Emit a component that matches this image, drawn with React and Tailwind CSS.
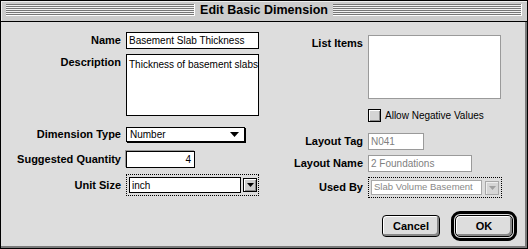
import React from 'react';

const sans = "font-['Liberation_Sans',Arial,sans-serif]";

const Stripes = () => (
  <div className="flex-1 h-[12px] bg-[repeating-linear-gradient(to_bottom,#777777_0px,#777777_1px,#f2f2f2_1px,#f2f2f2_2px)] shadow-[inset_-1px_-1px_0_#ffffff]" />
);

const Label = ({ children, width, className = '' }) => (
  <div className={`${width} shrink-0 text-right text-[11px] leading-[13px] font-bold text-black ${className}`}>
    {children}
  </div>
);

const Arrow = ({ color = '#000000', size = 'w-[9px] h-[5px]' }) => (
  <svg viewBox="0 0 9 5" className={size}>
    <polygon points="0,0 9,0 4.5,5" fill={color} />
  </svg>
);

const ArrowButton = ({ disabled }) => (
  <div
    className={`w-[14px] h-[14px] flex items-center justify-center border ${
      disabled
        ? 'border-[#a8a8a8] bg-[#d6d6d6] shadow-[inset_1px_1px_0_#eeeeee]'
        : 'border-black bg-[#cccccc] shadow-[inset_1px_1px_0_#ffffff,inset_-1px_-1px_0_#888888]'
    }`}
  >
    <Arrow color={disabled ? '#a0a0a0' : '#000000'} size="w-[7px] h-[4px]" />
  </div>
);

export default function App() {
  return (
    <div className={`w-[528px] h-[249px] border border-black bg-[#dddddd] flex flex-col ${sans}`}>
      {/* title bar */}
      <div className="h-[21px] shrink-0 border-b border-black bg-[#cccccc] shadow-[inset_1px_1px_0_#eeeeee] flex items-start pt-[3px] px-[5px]">
        <Stripes />
        <div className="px-[5px] -mt-[2px] text-[12.5px] leading-[16px] font-bold text-black whitespace-nowrap">
          Edit Basic Dimension
        </div>
        <Stripes />
      </div>

      {/* content */}
      <div className="flex-1 flex shadow-[inset_-2px_-2px_0_#7a7a7a]">
        {/* left column */}
        <div className="w-[261px] flex flex-col">
          <div className="mt-[10px] h-[17px] flex items-center">
            <Label width="w-[120px]">Name</Label>
            <div className="ml-[5px] w-[133px] h-[17px] border border-black bg-white pl-[2px] flex items-center text-[10px] text-black whitespace-nowrap">
              Basement Slab Thickness
            </div>
          </div>

          <div className="mt-[5px] h-[62px] flex items-start">
            <Label width="w-[120px]" className="pt-[2px]">Description</Label>
            <div className="ml-[5px] w-[133px] h-[62px] border border-black bg-white pl-[2px] pt-[4px] text-[10px] leading-[12px] text-black whitespace-nowrap">
              Thickness of basement slabs
            </div>
          </div>

          <div className="mt-[11px] h-[16px] flex items-start">
            <Label width="w-[120px]" className="pt-[1px]">Dimension Type</Label>
            <div className="ml-[5px] w-[119px] h-[15px] border border-black bg-white shadow-[1px_1px_0_#000000] pl-[3px] pr-[5px] flex items-center justify-between text-[10px] text-black">
              <span>Number</span>
              <Arrow />
            </div>
          </div>

          <div className="mt-[8px] h-[17px] flex items-center">
            <Label width="w-[120px]">Suggested Quantity</Label>
            <div className="ml-[5px] w-[69px] h-[17px] border border-black bg-white shadow-[-1px_-1px_0_#999999] pr-[3px] flex items-center justify-end text-[10px] text-black">
              4
            </div>
          </div>

          <div className="mt-[6px] h-[22px] flex items-center">
            <Label width="w-[120px]">Unit Size</Label>
            <div className="ml-[5px] w-[133px] h-[22px] border border-dotted border-black pl-[2px] flex items-center">
              <div className="w-[112px] h-[16px] border border-black bg-white pl-[2px] flex items-center text-[10px] text-black">
                inch
              </div>
              <div className="ml-[2px]">
                <ArrowButton />
              </div>
            </div>
          </div>
        </div>

        {/* right column */}
        <div className="flex-1 flex flex-col">
          <div className="mt-[13px] h-[64px] flex items-start">
            <Label width="w-[101px]" className="pt-[2px]">List Items</Label>
            <div className="ml-[5px] w-[133px] h-[64px] border border-[#9a9a9a] bg-white" />
          </div>

          <div className="mt-[9px] h-[14px] flex items-center pl-[106px]">
            <div className="w-[13px] h-[13px] border border-black bg-[#d4d4d4] shadow-[inset_1px_1px_0_#ffffff,inset_-1px_-1px_0_#8a8a8a]" />
            <span className="ml-[4px] text-[10px] text-black whitespace-nowrap">Allow Negative Values</span>
          </div>

          <div className="mt-[11px] h-[17px] flex items-center">
            <Label width="w-[101px]">Layout Tag</Label>
            <div className="ml-[5px] w-[56px] h-[17px] border border-[#9a9a9a] bg-white pl-[2px] flex items-center text-[10px] text-[#808080]">
              N041
            </div>
          </div>

          <div className="mt-[5px] h-[17px] flex items-center">
            <Label width="w-[101px]">Layout Name</Label>
            <div className="ml-[5px] w-[104px] h-[17px] border border-[#9a9a9a] bg-white pl-[2px] flex items-center text-[10px] text-[#808080] whitespace-nowrap">
              2 Foundations
            </div>
          </div>

          <div className="mt-[5px] h-[21px] flex items-center">
            <Label width="w-[101px]">Used By</Label>
            <div className="ml-[5px] w-[134px] h-[21px] border border-dotted border-black pl-[2px] flex items-center">
              <div className="w-[111px] h-[15px] border border-[#a8a8a8] bg-white pl-[2px] flex items-center text-[9.5px] text-[#888888] whitespace-nowrap overflow-hidden">
                Slab Volume Basement
              </div>
              <div className="ml-[3px]">
                <ArrowButton disabled />
              </div>
            </div>
          </div>

          <div className="mt-[13px] h-[30px] flex items-center justify-end gap-[11px] pr-[10px]">
            <div className="w-[58px] h-[22px] rounded-[4px] border border-black bg-[#dddddd] shadow-[inset_1px_1px_0_#ffffff,inset_-2px_-2px_0_#888888] flex items-center justify-center text-[11px] font-bold text-black">
              Cancel
            </div>
            <div className="w-[66px] h-[30px] rounded-[9px] border-[3px] border-black p-[1px] bg-[#dddddd]">
              <div className="w-full h-full rounded-[5px] border border-black bg-[#dddddd] shadow-[inset_1px_1px_0_#ffffff,inset_-2px_-2px_0_#888888] flex items-center justify-center text-[11px] font-bold text-black">
                OK
              </div>
            </div>
          </div>
        </div>
      </div>
    </div>
  );
}
